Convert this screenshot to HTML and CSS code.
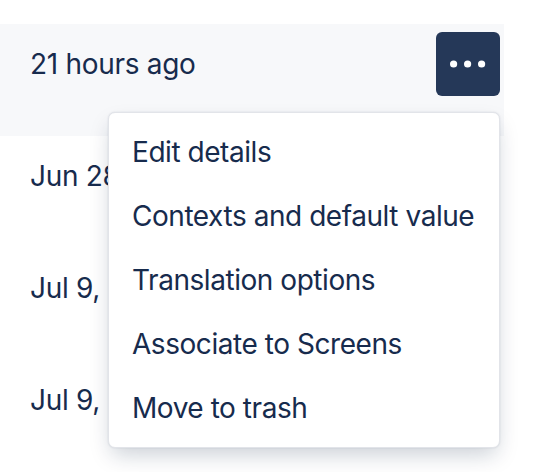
FILE: index.html
```html
<!DOCTYPE html>
<html lang="en">
<head>
<meta charset="utf-8">
<title>Field actions</title>
<link rel="stylesheet" href="styles.css">
</head>
<body>
<div class="table">
  <div class="row row-active">
    <div class="cell-date">21 hours ago</div>
    <div class="cell-actions">
      <div class="actions">
        <button class="more-btn" type="button" aria-label="More actions">
          <svg class="more-icon" width="48" height="48" viewBox="0 0 24 24" aria-hidden="true">
            <circle cx="4.8" cy="12" r="1.8" fill="#fff"/>
            <circle cx="11.8" cy="12" r="1.8" fill="#fff"/>
            <circle cx="18.8" cy="12" r="1.8" fill="#fff"/>
          </svg>
        </button>
        <ul class="menu" role="menu">
          <li class="menu-item">Edit details</li>
          <li class="menu-item">Contexts and default value</li>
          <li class="menu-item">Translation options</li>
          <li class="menu-item">Associate to Screens</li>
          <li class="menu-item">Move to trash</li>
        </ul>
      </div>
    </div>
  </div>
  <div class="row">
    <div class="cell-date">Jun 28, 2023</div>
  </div>
  <div class="row">
    <div class="cell-date">Jul 9, 2023</div>
  </div>
  <div class="row">
    <div class="cell-date">Jul 9, 2023</div>
  </div>
</div>
</body>
</html>
```

FILE: styles.css
```css
html, body {
  margin: 0;
  padding: 0;
  background: #ffffff;
}

body {
  font-family: Inter, "Noto Sans", "Liberation Sans", sans-serif;
  color: #172b4d;
  overflow: hidden;
}

.table {
  padding-top: 24px;
  width: 504px;
}

.row {
  height: 112px;
  box-sizing: border-box;
  padding: 8px 4px 0 30px;
  display: flex;
  align-items: flex-start;
  justify-content: space-between;
}

.row-active {
  background: #f7f8fa;
}

.cell-date {
  height: 64px;
  display: flex;
  align-items: center;
  font-size: 28px;
  line-height: 40px;
  letter-spacing: -0.3px;
  white-space: nowrap;
}

.cell-actions {
  height: 64px;
}

.actions {
  position: relative;
}

.more-btn {
  width: 64px;
  height: 64px;
  border: 0;
  padding: 0;
  margin: 0;
  border-radius: 6px;
  background: #253858;
  display: flex;
  align-items: center;
  justify-content: center;
  cursor: pointer;
}

.more-icon {
  display: block;
}

.menu {
  position: absolute;
  top: 80px;
  right: 0;
  width: 392px;
  box-sizing: border-box;
  margin: 0;
  padding: 7px 0;
  list-style: none;
  background: #ffffff;
  border: 1px solid #e2e4e9;
  border-radius: 7px;
  box-shadow: 0 10px 22px -4px rgba(9, 30, 66, 0.22), 0 0 2px rgba(9, 30, 66, 0.12);
  z-index: 10;
}

.menu-item {
  height: 64px;
  display: flex;
  align-items: center;
  padding-left: 23px;
  font-size: 28px;
  line-height: 40px;
  letter-spacing: -0.45px;
  white-space: nowrap;
  color: #172b4d;
}
```
